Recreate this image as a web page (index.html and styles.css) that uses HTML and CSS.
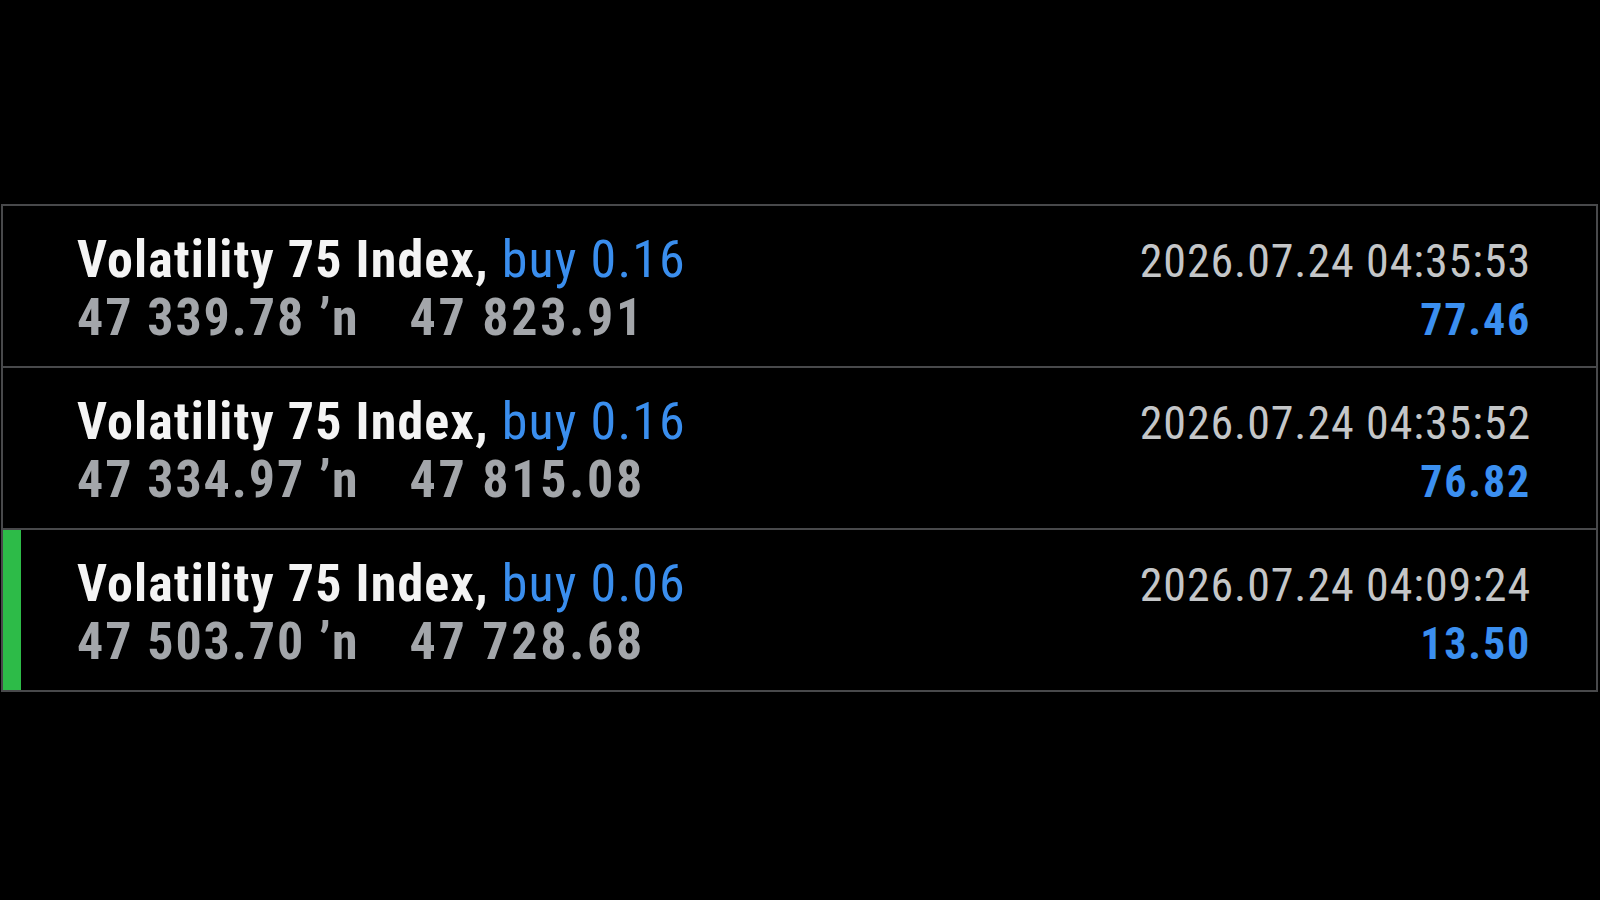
FILE: index.html
```html
<!DOCTYPE html>
<html>
<head>
<meta charset="utf-8">
<link rel="stylesheet" href="styles.css">
</head>
<body>
<div class="screen">
  <div class="list">
    <div class="row">
      <div class="line">
        <span class="title">Volatility 75 Index, <span class="side">buy 0.16</span></span>
        <span class="time">2026.07.24 04:35:53</span>
      </div>
      <div class="line">
        <span class="prices">47 339.78 ʼn<span class="to">47 823.91</span></span>
        <span class="profit">77.46</span>
      </div>
    </div>
    <div class="row">
      <div class="line">
        <span class="title">Volatility 75 Index, <span class="side">buy 0.16</span></span>
        <span class="time">2026.07.24 04:35:52</span>
      </div>
      <div class="line">
        <span class="prices">47 334.97 ʼn<span class="to">47 815.08</span></span>
        <span class="profit">76.82</span>
      </div>
    </div>
    <div class="row selected">
      <div class="line">
        <span class="title">Volatility 75 Index, <span class="side">buy 0.06</span></span>
        <span class="time">2026.07.24 04:09:24</span>
      </div>
      <div class="line">
        <span class="prices">47 503.70 ʼn<span class="to">47 728.68</span></span>
        <span class="profit">13.50</span>
      </div>
    </div>
  </div>
</div>
</body>
</html>
```

FILE: styles.css
```css
* { box-sizing: border-box; }
html, body {
  margin: 0;
  padding: 0;
  background: #000;
}
body {
  width: 1600px;
  height: 900px;
  overflow: hidden;
  font-family: "Roboto Condensed", Roboto, "Liberation Sans", sans-serif;
  font-stretch: condensed;
}
.screen {
  padding-top: 204px;
  padding-left: 1px;
  padding-right: 2px;
}
.list {
  border: 2px solid #48494b;
  border-bottom: none;
}
.row {
  position: relative;
  padding: 25px 65px 19px 74px;
  border-bottom: 2px solid #48494b;
}
.row.selected::before {
  content: "";
  position: absolute;
  left: 0;
  top: 0;
  bottom: 0;
  width: 18px;
  background: #2dbb48;
}
.line {
  display: flex;
  justify-content: space-between;
  align-items: baseline;
  height: 58px;
  line-height: 58px;
}
.title {
  font-size: 52px;
  font-weight: 700;
  letter-spacing: 1.1px;
  color: #f4f4f4;
}
.side {
  font-weight: 400;
  color: #3a8eee;
}
.prices {
  font-size: 52px;
  font-weight: 700;
  letter-spacing: 1.9px;
  color: #a3a6aa;
}
.to {
  margin-left: 50px;
  letter-spacing: 2.7px;
}
.time {
  font-size: 46px;
  font-weight: 400;
  letter-spacing: 0.9px;
  color: #c4c6c8;
}
.profit {
  font-size: 44px;
  font-weight: 700;
  letter-spacing: 1.8px;
  color: #3b8ff0;
}
```
